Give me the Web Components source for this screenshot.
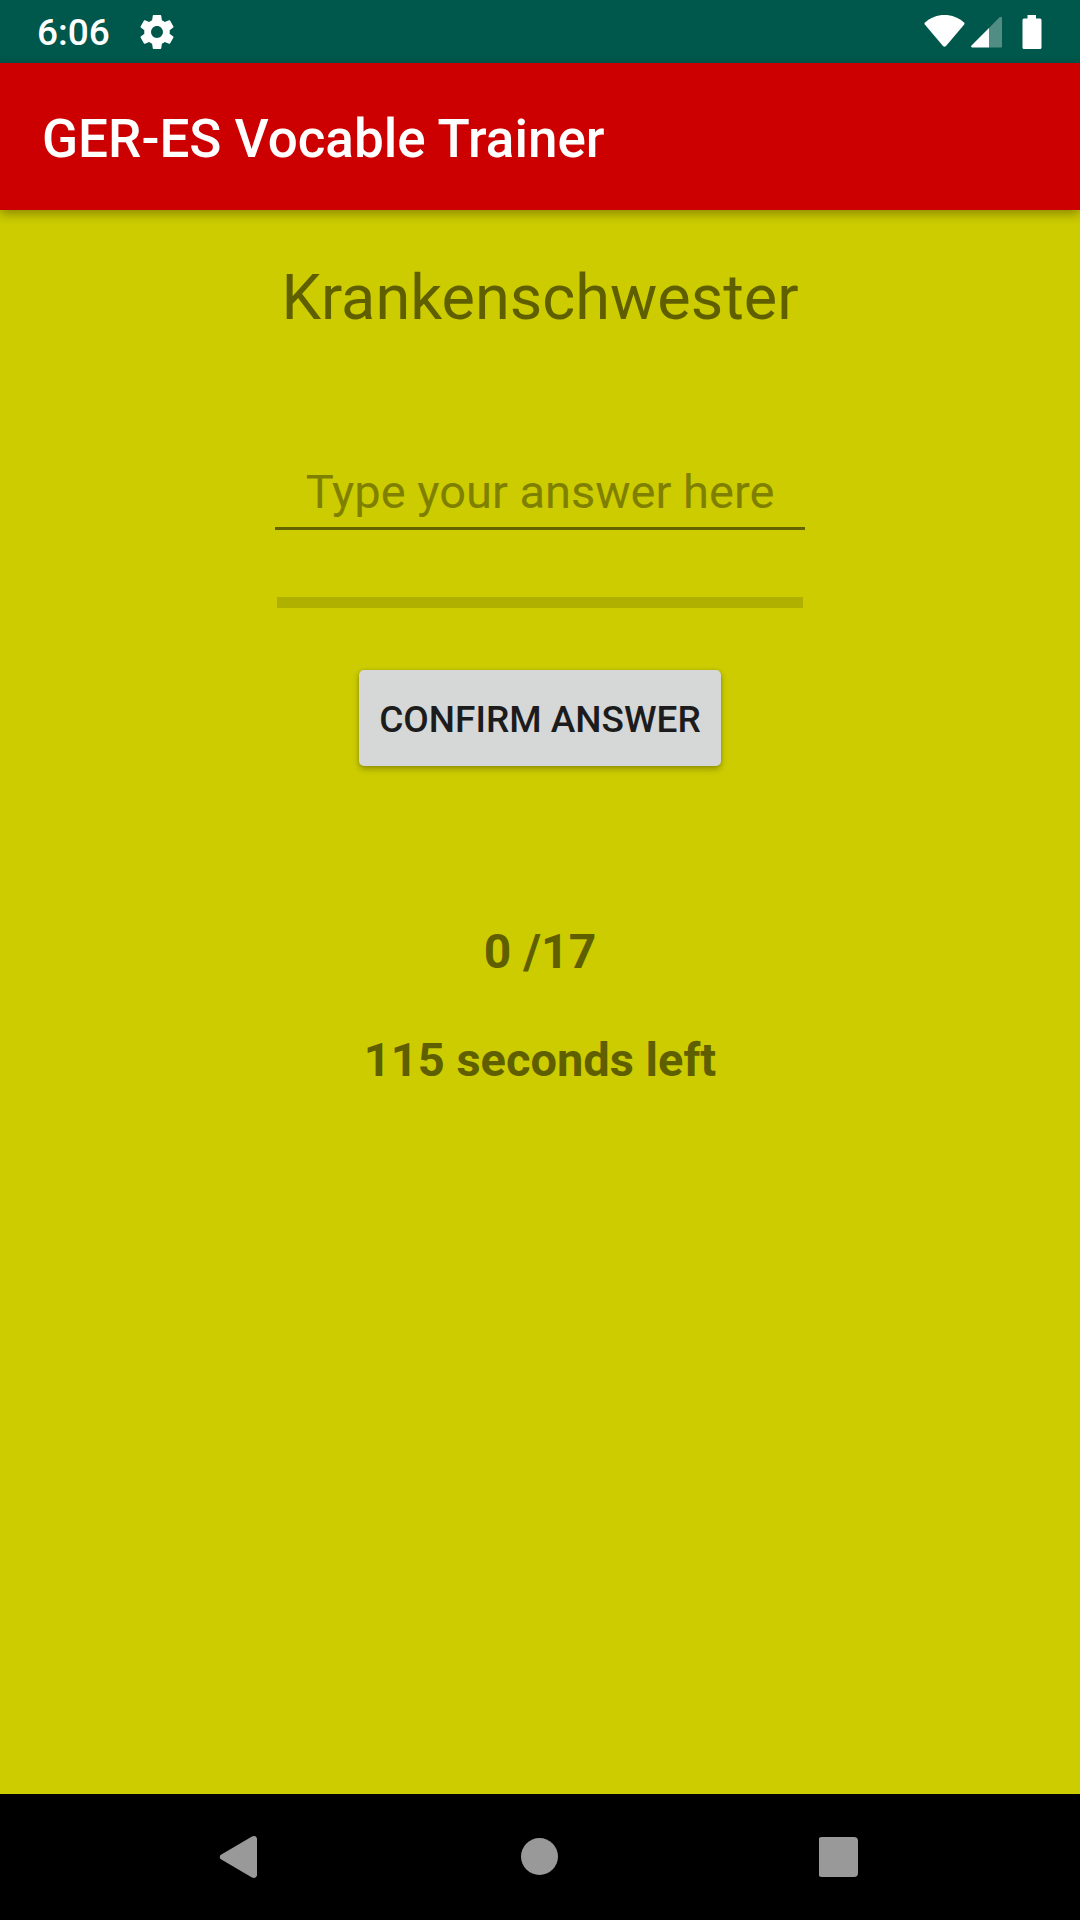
<!DOCTYPE html>
<html lang="en">
<head>
<meta charset="utf-8">
<meta name="viewport" content="width=device-width, initial-scale=1">
<title>GER-ES Vocable Trainer</title>
<style>
  html, body { margin: 0; height: 100%; }
  body { font-family: Roboto, "Noto Sans", sans-serif; background: #cccc00; }
</style>
</head>
<body>
<trainer-app></trainer-app>

<template id="status-bar">
  <style>
    :host { display: flex; justify-content: space-between; align-items: center; height: 63px; padding: 0 38px 0 37px; background: #00574b; color: #fff; }
    div { display: flex; align-items: center; }
    svg { display: block; fill: #fff; }
    .left { gap: 30px; }
    time { font-size: 37px; line-height: 44px; font-weight: 500; padding-top: 3px; }
    .wifi { margin-right: 6px; }
    .signal { margin-right: 20px; }
  </style>
  <div class="left">
    <time><slot></slot></time>
    <svg width="34" height="34" viewBox="2.1 2 19.8 20" role="img" aria-label="Settings"><path d="M19.43 12.98c.04-.32.07-.64.07-.98s-.03-.66-.07-.98l2.11-1.65c.19-.15.24-.42.12-.64l-2-3.46c-.12-.22-.39-.3-.61-.22l-2.49 1c-.52-.4-1.08-.73-1.69-.98l-.38-2.65C14.460 2.180 14.250 2 14 2h-4c-.25 0-.46.18-.49.42l-.38 2.65c-.61.25-1.17.59-1.69.98l-2.49-1c-.23-.09-.49 0-.61.22l-2 3.460c-.13.22-.07.49.12.64l2.110 1.650c-.04.32-.07.65-.07.98s.03.66.07.98l-2.110 1.650c-.19.15-.24.42-.12.64l2 3.460c.12.22.39.3.61.22l2.490-1c.52.4 1.080.73 1.690.98l.38 2.650c.03.24.24.42.49.42h4c.25 0 .46-.18.49-.42l.38-2.650c.61-.25 1.170-.59 1.690-.98l2.490 1c.23.09.49 0 .61-.22l2-3.460c.12-.22.07-.49-.12-.64l-2.110-1.650zM12 15.500c-1.930 0-3.500-1.570-3.500-3.500s1.570-3.500 3.500-3.500 3.500 1.570 3.500 3.500-1.570 3.500-3.500 3.500z"/></svg>
  </div>
  <div>
    <svg class="wifi" width="41" height="34" viewBox="0 0 41 34" role="img" aria-label="Wi-Fi"><path d="M1 7.500C6.500 2.500 13 0 20.500 0S34.500 2.500 40 7.500Q41 8.500 40.200 9.600L22 31Q20.500 32.500 19 31L.8 9.600Q0 8.500 1 7.500Z"/></svg>
    <svg class="signal" width="31" height="34" viewBox="0 0 31 34" role="img" aria-label="Mobile signal"><path d="M18 13V32.500H1Q-.5 32 .5 30.500Z"/><path opacity=".32" d="M18 13 28.500 2.300Q30.500 1 31 3V31.500Q31 32.500 30 32.500H18Z"/></svg>
    <svg width="20" height="34" viewBox="0 0 20 34" role="img" aria-label="Battery"><path d="M5.500 0H14V3.500H18Q19.500 3.500 19.500 5V32.500Q19.500 34 18 34H2Q.5 34 .5 32.500V5Q.5 3.500 2 3.500H5.500Z"/></svg>
  </div>
</template>

<template id="app-bar">
  <style>
    :host { display: flex; align-items: center; box-sizing: border-box; height: 147px; padding: 4px 42px 0; background: #cc0000; color: #fff; box-shadow: 0 4px 10px rgba(0,0,0,.32); z-index: 1; }
    h1 { margin: 0; font-size: 53px; line-height: 62px; font-weight: 500; white-space: nowrap; }
  </style>
  <h1><slot></slot></h1>
</template>

<template id="answer-form">
  <style>
    :host { display: block; width: 530px; max-width: 100%; }
    form { display: flex; flex-direction: column; align-items: center; }
    input { box-sizing: border-box; width: 100%; height: 66px; margin: 0; padding: 0 0 9px; border: 0; border-bottom: 3px solid #636300; border-radius: 0; outline: 0; background: none; font: 400 47px/54px Roboto, sans-serif; text-align: center; color: #222200; }
    input::placeholder { color: #808000; opacity: 1; }
    progress { display: block; appearance: none; -webkit-appearance: none; width: 526px; max-width: 100%; height: 11px; margin: 67px 0 62px; border: 0; background: #b0b000; color: #008577; }
    progress::-webkit-progress-bar { background: #b0b000; }
    progress::-webkit-progress-value { background: #008577; }
    button { height: 96px; margin: 0; padding: 3px 20px 0; border: 0; border-radius: 5px; background: #d6d7d7; color: #1c1c1c; font: 500 37px/44px Roboto, sans-serif; text-transform: uppercase; white-space: nowrap; box-shadow: 0 3px 6px rgba(0,0,0,.28), 0 0 3px rgba(0,0,0,.12); }
  </style>
  <form>
    <input type="text" aria-label="Your answer" placeholder="Type your answer here" autocomplete="off">
    <progress value="0" max="17" aria-label="Progress"></progress>
    <button type="button">Confirm answer</button>
  </form>
</template>

<template id="nav-bar">
  <style>
    :host { display: grid; grid-template-columns: repeat(3, 1fr); height: 126px; padding: 0 8.333%; background: #000; }
    button { display: flex; align-items: center; justify-content: center; margin: 0; padding: 0; border: 0; background: none; }
    svg { fill: #999; }
  </style>
  <button type="button" aria-label="Back"><svg width="42" height="42" viewBox="0 0 42 42"><path d="M1.500 19 33 .5Q37 -1 38 2.500V39.500Q37 43 33 41.500L1.500 23Q0 21 1.500 19Z"/></svg></button>
  <button type="button" aria-label="Home"><svg width="42" height="42" viewBox="0 0 42 42"><circle cx="20.500" cy="20.500" r="18.500"/></svg></button>
  <button type="button" aria-label="Overview"><svg width="42" height="42" viewBox="1 0 42 42"><rect y="1" x="0" width="40" height="40" rx="4"/></svg></button>
</template>

<template id="trainer-app">
  <style>
    :host { display: flex; flex-direction: column; min-height: 100vh; }
    main { flex: 1; display: flex; flex-direction: column; align-items: center; padding: 51px 16px; background: #cccc00; color: #5f5f00; }
    h2, p { margin: 0; text-align: center; }
    h2 { font-size: 63px; line-height: 74px; font-weight: 400; margin-bottom: 129px; }
    p { font-size: 47px; line-height: 56px; font-weight: 700; }
    .score { margin: 158px 0 52px; font-size: 48px; }
  </style>
  <status-bar>6:06</status-bar>
  <app-bar>GER-ES Vocable Trainer</app-bar>
  <main>
    <h2>Krankenschwester</h2>
    <answer-form></answer-form>
    <p class="score">0 /17</p>
    <p>115 seconds left</p>
  </main>
  <nav-bar></nav-bar>
</template>

<script>
  class TemplateElement extends HTMLElement {
    constructor() {
      super();
      const template = document.getElementById(this.localName);
      this.attachShadow({ mode: "open" }).append(template.content.cloneNode(true));
    }
  }
  customElements.define("status-bar", class StatusBar extends TemplateElement {});
  customElements.define("app-bar", class AppBar extends TemplateElement {});
  customElements.define("answer-form", class AnswerForm extends TemplateElement {});
  customElements.define("nav-bar", class NavBar extends TemplateElement {});
  customElements.define("trainer-app", class TrainerApp extends TemplateElement {});
</script>
</body>
</html>
